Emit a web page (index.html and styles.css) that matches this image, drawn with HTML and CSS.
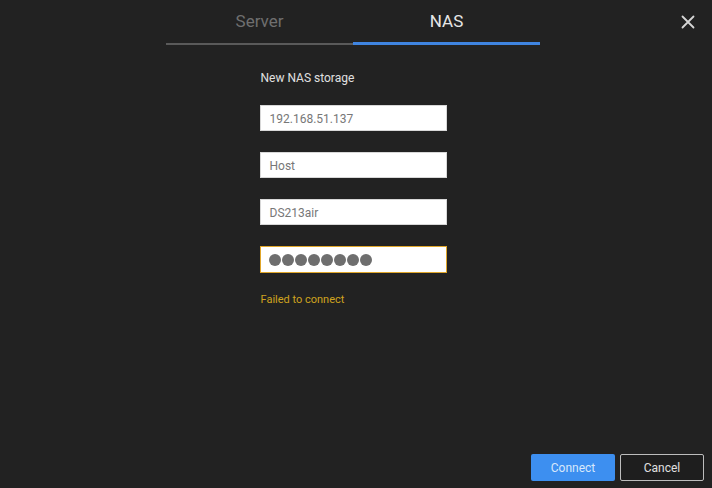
FILE: index.html
```html
<!DOCTYPE html>
<html lang="en">
<head>
    <meta charset="UTF-8">
    <title>NAS</title>
    <link rel="stylesheet" href="styles.css">
</head>
<body>
    <div class="dialog">
        <div class="tabs">
            <div class="tab">Server</div>
            <div class="tab active">NAS</div>
        </div>
        <button class="close" type="button">
            <svg width="14" height="14" viewBox="0 0 14 14"><path d="M1.5 1.5L12.5 12.5M12.5 1.5L1.5 12.5" stroke="#d6d6d6" stroke-width="1.8" stroke-linecap="round"/></svg>
        </button>

        <div class="form">
            <div class="title">New NAS storage</div>
            <div class="field">192.168.51.137</div>
            <div class="field">Host</div>
            <div class="field">DS213air</div>
            <div class="field password">
                <span class="dot"></span><span class="dot"></span><span class="dot"></span><span class="dot"></span><span class="dot"></span><span class="dot"></span><span class="dot"></span><span class="dot"></span>
            </div>
            <div class="error">Failed to connect</div>
        </div>

        <div class="footer">
            <button class="connect-button">Connect</button>
            <button class="cancel-button">Cancel</button>
        </div>
    </div>
</body>
</html>
```

FILE: styles.css
```css
body {
    margin: 0;
    padding: 0;
    background-color: #222222;
    font-family: Roboto, "Liberation Sans", Arial, sans-serif;
    color: #ddd;
}
.dialog {
    width: 712px;
    height: 488px;
    position: relative;
    display: flex;
    flex-direction: column;
    box-sizing: border-box;
    padding-right: 6px;
}
.tabs {
    display: flex;
    justify-content: center;
}
.tab {
    width: 187px;
    height: 45px;
    line-height: 42px;
    text-align: center;
    font-size: 17px;
    color: #6f6f6f;
    border-bottom: 2px solid #5a5a5a;
    box-sizing: border-box;
}
.tab.active {
    color: #e6e6e6;
    border-bottom: 3px solid #3f84e0;
}
.close {
    position: absolute;
    top: 15px;
    right: 17px;
    background: none;
    border: none;
    padding: 0;
    width: 14px;
    height: 14px;
    cursor: pointer;
}
.form {
    width: 187px;
    margin: 26px auto 0 auto;
    display: flex;
    flex-direction: column;
}
.title {
    font-size: 12px;
    color: #e0e0e0;
    margin-left: 1px;
    margin-bottom: 20px;
}
.field {
    height: 26px;
    line-height: 26px;
    background: #fff;
    border: 1px solid #d8d8d8;
    box-sizing: border-box;
    padding-left: 9px;
    font-size: 12px;
    color: #777;
    margin-bottom: 21px;
}
.field.password {
    height: 27px;
    border: 1.5px solid #e0a62a;
    display: flex;
    align-items: center;
    gap: 1px;
    padding-left: 8px;
    margin-bottom: 20px;
}
.dot {
    width: 12px;
    height: 12px;
    border-radius: 50%;
    background: #6e6e6e;
}
.error {
    font-size: 11px;
    color: #cfa21f;
    margin-left: 1px;
}
.footer {
    margin-top: auto;
    display: flex;
    justify-content: flex-end;
    gap: 5px;
    padding: 0 2px 7px 0;
}
.connect-button, .cancel-button {
    width: 84px;
    height: 27px;
    font-family: Roboto, "Liberation Sans", Arial, sans-serif;
    font-size: 12px;
    border-radius: 2px;
    cursor: pointer;
}
.connect-button {
    background-color: #3d8ff0;
    color: #d8e8fb;
    border: none;
}
.cancel-button {
    background-color: #1e1e1e;
    color: #e0e0e0;
    border: 1px solid #bdbdbd;
}
```
